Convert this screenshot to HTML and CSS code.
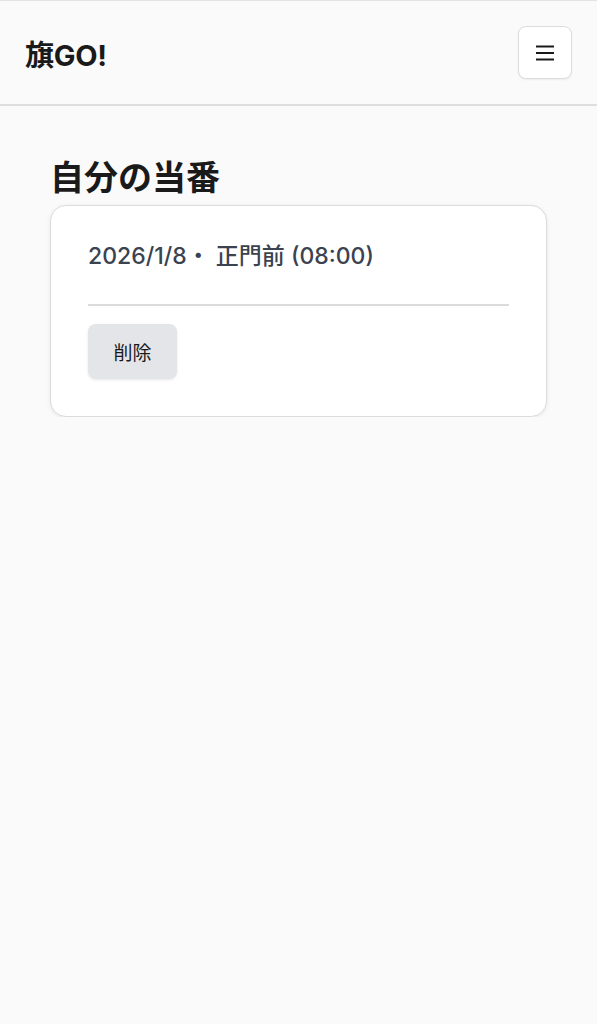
FILE: index.html
```html
<!DOCTYPE html>
<html lang="ja">
<head>
    <meta charset="UTF-8">
    <meta name="viewport" content="width=device-width, initial-scale=1.0">
    <title>旗GO!</title>
    <link rel="stylesheet" href="styles.css">
</head>
<body>
    <header class="site-header">
        <div class="brand">旗GO!</div>
        <button class="menu-button" aria-label="メニュー">
            <svg width="18" height="16" viewBox="0 0 18 16">
                <path d="M0 1.5H18M0 8H18M0 14.5H18" stroke="#1a1a1a" stroke-width="2"/>
            </svg>
        </button>
    </header>

    <main class="content">
        <h1 class="page-title">自分の当番</h1>

        <div class="duty-card">
            <div class="duty-info">2026/1/8・ 正門前 (08:00)</div>
            <hr class="duty-divider">
            <button class="delete-button">削除</button>
        </div>
    </main>
</body>
</html>
```

FILE: styles.css
```css
body {
    margin: 0;
    background: #fafafa;
    font-family: Inter, "Noto Sans CJK JP", sans-serif;
    color: #1a1a1a;
}
.site-header {
    display: flex;
    justify-content: space-between;
    align-items: center;
    height: 103px;
    padding: 0 25px;
    border-top: 1px solid #e3e3e3;
    border-bottom: 2px solid #dedede;
}
.brand {
    font-size: 29px;
    font-weight: 700;
    letter-spacing: -0.3px;
}
.menu-button {
    width: 54px;
    height: 53px;
    display: flex;
    align-items: center;
    justify-content: center;
    background: #fff;
    border: 1px solid #dcdcdf;
    border-radius: 8px;
    box-shadow: 0 1px 2px rgba(0, 0, 0, 0.06);
    padding: 0;
}
.content {
    padding: 0 50px;
}
.page-title {
    margin: 50px 0 5px;
    font-size: 34px;
    font-weight: 700;
    line-height: 44px;
}
.duty-card {
    background: #fff;
    border: 1px solid #dcdcdc;
    border-radius: 16px;
    box-shadow: 0 1px 4px rgba(0, 0, 0, 0.08);
    padding: 30px 37px 37px;
}
.duty-info {
    font-size: 23px;
    font-weight: 500;
    color: #3b4250;
    line-height: 40px;
}
.duty-divider {
    border: 0;
    border-top: 2px solid #dadbdd;
    margin: 28px 0 18px;
}
.delete-button {
    width: 89px;
    height: 55px;
    background: #e4e5e9;
    border: 0;
    border-radius: 8px;
    box-shadow: 0 1px 3px rgba(0, 0, 0, 0.1);
    font-family: inherit;
    font-size: 19px;
    color: #1a1a1a;
}
```
